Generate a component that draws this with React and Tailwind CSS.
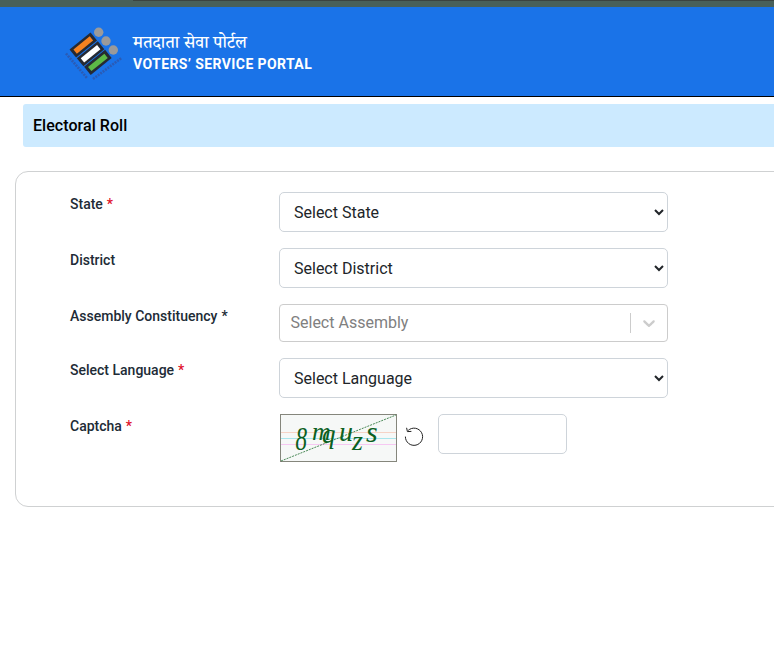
import React from "react";

const font = { fontFamily: "Roboto, 'Noto Sans', sans-serif" };

function Bar({ cx, cy, fill }) {
  return (
    <g transform={`rotate(-39 ${cx} ${cy})`}>
      <rect x={cx - 13.5} y={cy - 5.2} width="27" height="10.4" fill="#262a33" />
      <rect x={cx - 10.5} y={cy - 2.7} width="21" height="5.4" fill={fill} />
    </g>
  );
}

function Logo() {
  return (
    <svg width="60" height="56" viewBox="0 0 60 56" className="shrink-0 mt-[19px]">
      <path d="M2 27.5 L23 52" stroke="#2f55a8" strokeWidth="2.6" strokeDasharray="2 1" fill="none" opacity="0.8" />
      <path d="M29 53 L57.5 32" stroke="#2f55a8" strokeWidth="2.6" strokeDasharray="2 1" fill="none" opacity="0.8" />
      <Bar cx={19.3} cy={19} fill="#f58220" />
      <Bar cx={26.6} cy={27.7} fill="#ffffff" />
      <Bar cx={33.9} cy={36.4} fill="#5cb947" />
      <circle cx="34.7" cy="6.3" r="4.7" fill="#9a9a9a" />
      <circle cx="42" cy="15" r="4.7" fill="#9a9a9a" />
      <circle cx="49.3" cy="24" r="4.7" fill="#9a9a9a" />
    </svg>
  );
}

function Label({ children, star, starClass = "text-[#e0102a]" }) {
  return (
    <label className="w-[209px] shrink-0 mt-[2px] text-[14px] leading-[21px] font-[480] text-[#212b36]">
      {children}
      {star && <span className={`ml-1 ${starClass}`}>*</span>}
    </label>
  );
}

function NativeSelect({ text }) {
  return (
    <select
      defaultValue={text}
      style={font}
      className="w-[389px] h-10 rounded-[5px] border border-[#ced4da] bg-white pl-[10px] pr-2 text-[16px] text-[#212529]"
    >
      <option>{text}</option>
    </select>
  );
}

function Captcha() {
  return (
    <svg width="117" height="48" viewBox="0 0 117 48" className="shrink-0 block">
      <rect x="0.5" y="0.5" width="116" height="47" fill="#f6f8f7" stroke="#85867c" />
      <line x1="1" y1="18.5" x2="116" y2="18.5" stroke="#f6d3c6" />
      <line x1="1" y1="24.5" x2="116" y2="24.5" stroke="#a9e6ec" />
      <line x1="1" y1="30.5" x2="116" y2="30.5" stroke="#f6c8f2" />
      <line x1="1" y1="47" x2="116" y2="1" stroke="#1c6b2c" strokeWidth="0.8" strokeDasharray="2 1" />
      <g fill="#0c601f" fontFamily="'Liberation Serif', serif" fontStyle="italic">
        <text transform="translate(15.5 36) scale(0.7 1)" fontSize="33">8</text>
        <text x="32" y="26" fontSize="26">m</text>
        <text x="42" y="29" fontSize="27">q</text>
        <text x="59" y="27" fontSize="28">u</text>
        <text x="72" y="36" fontSize="28">z</text>
        <text x="86" y="28" fontSize="30">s</text>
      </g>
    </svg>
  );
}

export default function App() {
  return (
    <div style={font} className="h-[648px] w-[774px] overflow-hidden bg-white">
      <div className="h-[7px] bg-[#48605a] flex">
        <div className="w-[133px]" />
        <div className="flex-1 h-[1px] bg-[#3b4340]" />
      </div>
      <header className="h-[90px] bg-[#1a73e8] border-b border-black flex items-start pl-[64px] gap-[9px]">
        <Logo />
        <div className="text-white mt-[31px]">
          <div
            className="text-[17.5px] leading-[16px] font-medium"
            style={{ fontFamily: "'Noto Serif Devanagari', 'Noto Sans Devanagari', 'Noto Sans', serif" }}
          >
            मतदाता सेवा पोर्टल
          </div>
          <div className="text-[14px] leading-[20px] font-bold tracking-[0.4px]">VOTERS’ SERVICE PORTAL</div>
        </div>
      </header>

      <div className="ml-[23px] mt-[7px] h-[43px] w-[800px] rounded-l-[3px] bg-[#cceaff] flex items-center pl-[10px] text-[16px] tracking-[0.05px] font-medium text-black">
        Electoral Roll
      </div>

      <div className="ml-[15px] mt-6 w-[820px] h-[336px] rounded-[13px] border border-[#cfd1d2] pl-[54px] pt-5">
        <div className="flex items-start h-10">
          <Label star>State</Label>
          <NativeSelect text="Select State" />
        </div>
        <div className="flex items-start h-10 mt-4">
          <Label>District</Label>
          <NativeSelect text="Select District" />
        </div>
        <div className="flex items-start h-[38px] mt-4">
          <Label star starClass="text-[#212b36]">Assembly Constituency</Label>
          <div className="w-[389px] h-[38px] rounded-[4px] border border-[#cccccc] bg-white flex items-center pl-[10.5px] text-[16px] text-[#808080]">
            <span className="flex-1">Select Assembly</span>
            <span className="w-px h-5 bg-[#cccccc]" />
            <svg width="20" height="20" viewBox="0 0 20 20" className="mx-2 text-[#cccccc]" fill="currentColor">
              <path d="M4.516 7.548c.436-.446 1.043-.481 1.576 0L10 11.295l3.908-3.747c.533-.481 1.141-.446 1.574 0 .436.445.408 1.197 0 1.615-.406.418-4.695 4.502-4.695 4.502a1.095 1.095 0 0 1-1.576 0S4.924 9.581 4.516 9.163c-.409-.418-.436-1.17 0-1.615z" />
            </svg>
          </div>
        </div>
        <div className="flex items-start h-10 mt-4">
          <Label star>Select Language</Label>
          <NativeSelect text="Select Language" />
        </div>
        <div className="flex items-start mt-4">
          <Label star>Captcha</Label>
          <div className="ml-[1px] shrink-0"><Captcha /></div>
          <svg width="20" height="20" viewBox="0 0 20 20" className="ml-[7px] mt-[12px] shrink-0" fill="none" stroke="#222" strokeWidth="1">
            <path d="M4.2 4.4A8.6 8.6 0 1 1 1.4 10.6" />
            <path d="M2.6 1.8 L3.4 5.6 L7.4 5.4" />
          </svg>
          <input className="ml-[14px] w-[129px] h-10 rounded-[5px] border border-[#ced4da] bg-white" />
        </div>
      </div>
    </div>
  );
}
